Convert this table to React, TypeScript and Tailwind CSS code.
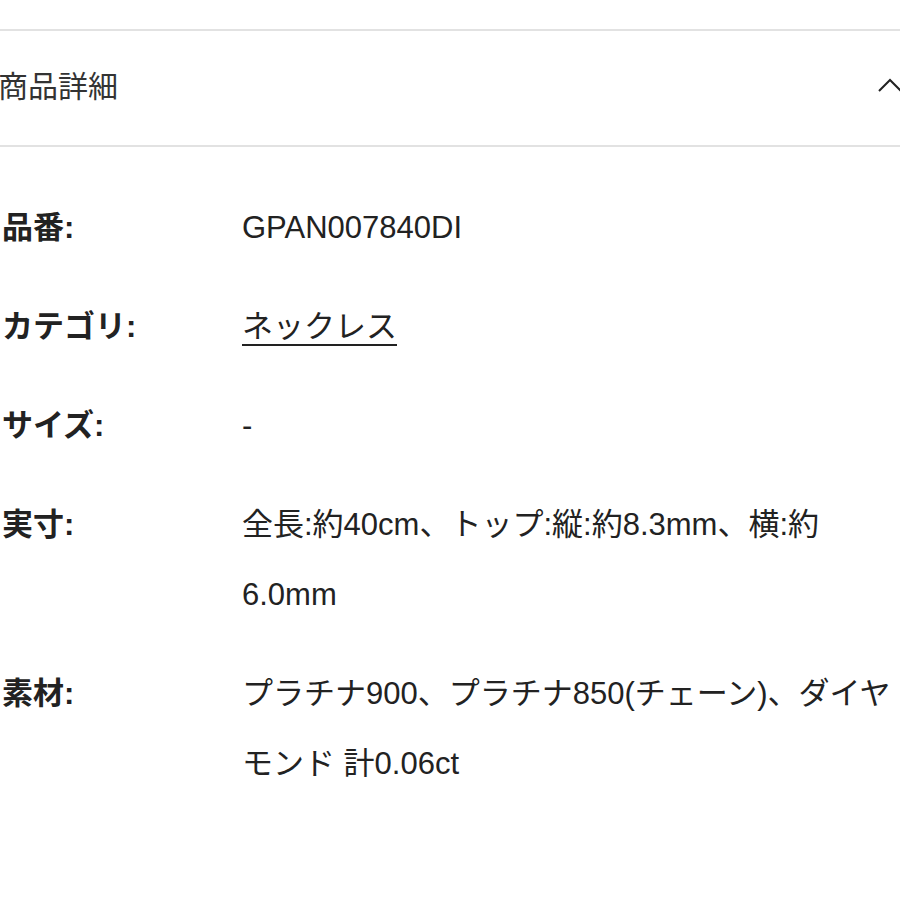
import React from "react";

const font = { fontFamily: '"Liberation Sans", "Noto Sans CJK JP", Arial, sans-serif' };

type Row = { label: string; value: React.ReactNode };

const rows: Row[] = [
  { label: "品番:", value: "GPAN007840DI" },
  { label: "カテゴリ:", value: <span className="underline underline-offset-[7px] decoration-[2px]">ネックレス</span> },
  { label: "サイズ:", value: "-" },
  { label: "実寸:", value: "全長:約40cm、トップ:縦:約8.3mm、横:約6.0mm" },
  { label: "素材:", value: "プラチナ900、プラチナ850(チェーン)、ダイヤモンド 計0.06ct" },
];

export default function App() {
  return (
    <div className="w-[900px] h-[900px] overflow-hidden bg-white text-[#222]" style={font}>
      <div className="h-[29px]" />
      <div className="border-t-2 border-b-2 border-[#e2e2e2] h-[118px] flex items-center justify-between">
        <span className="text-[30px] ml-[-2px] text-[#333] mt-[-4px]">商品詳細</span>
        <svg width="26" height="16" viewBox="0 0 26 16" className="mr-[-4px] mt-[-4px] shrink-0">
          <path d="M1 13 L12 2 L23 13" fill="none" stroke="#222" strokeWidth="2" />
        </svg>
      </div>
      <div className="pt-[46px] flex flex-col gap-[29px] pl-[2px]">
        {rows.map((r) => (
          <div key={r.label} className="flex text-[31px] leading-[70px]">
            <div className="w-[240px] shrink-0 font-bold text-[#222]">{r.label}</div>
            <div className="w-[658px] shrink-0 text-[#222]">{r.value}</div>
          </div>
        ))}
      </div>
    </div>
  );
}
